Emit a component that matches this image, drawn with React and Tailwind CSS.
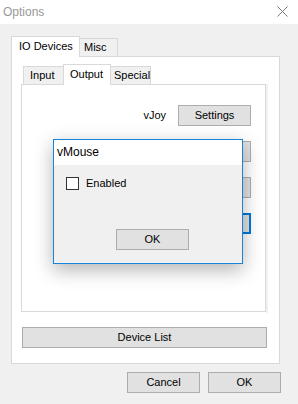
import React from "react";

const Btn = ({ children, focused = false }) => (
  <div
    className={
      focused
        ? "h-[21px] w-[73px] bg-[#e1e1e1] border-2 border-[#0078d7] flex items-center justify-center text-[11px] text-black"
        : "h-[21px] w-[73px] bg-[#e1e1e1] border border-[#adadad] flex items-center justify-center text-[11px] text-black"
    }
  >
    {children}
  </div>
);

export default function App() {
  return (
    <div className="w-[298px] h-[404px] bg-[#f0f0f0] relative overflow-hidden font-['Liberation_Sans',Arial,sans-serif] text-[11px] text-black leading-none">
      {/* title bar */}
      <div className="h-[24px] bg-white flex items-center justify-between pl-[3px] pr-[10px]">
        <span className="text-[12px] text-[#999999] pb-[1px]">Options</span>
        <svg width="11" height="11" viewBox="0 0 11 11" className="mt-[-2px]">
          <path d="M0.5 0.5 L10.5 10.5 M10.5 0.5 L0.5 10.5" stroke="#777" strokeWidth="1" fill="none" />
        </svg>
      </div>

      {/* outer tab control */}
      <div className="pl-[11px] pt-[12px]">
        <div className="flex items-end h-[20px]">
          <div className="relative z-10 -mb-[1px] h-[21px] w-[69px] bg-white border border-b-0 border-[#d9d9d9] pl-[7px] flex items-center pb-[1px]">
            IO Devices
          </div>
          <div className="h-[18px] w-[38px] bg-[#f0f0f0] border border-l-0 border-b-0 border-[#d9d9d9] pl-[4px] flex items-center">
            Misc
          </div>
        </div>
        <div className="w-[269px] h-[308px] border border-[#d9d9d9] bg-white pt-[7px] pl-[9px] flex flex-col">
          {/* inner tabs */}
          <div className="flex items-end h-[20px]">
            <div className="ml-[2px] h-[18px] w-[40px] bg-[#f0f0f0] border border-r-0 border-b-0 border-[#d9d9d9] pl-[6px] flex items-center">
              Input
            </div>
            <div className="relative z-10 -mb-[1px] h-[21px] w-[48px] bg-white border border-b-0 border-[#d9d9d9] pl-[6px] flex items-center pb-[1px]">
              Output
            </div>
            <div className="h-[18px] w-[40px] bg-[#f0f0f0] border border-l-0 border-b-0 border-[#d9d9d9] pl-[3px] flex items-center">
              Special
            </div>
          </div>
          <div className="flex">
            <div className="w-[245px] h-[228px] border border-[#d9d9d9] bg-white pt-[20px] pr-[14px] flex flex-col gap-[15px]">
              <div className="flex items-center justify-end gap-[12px]">
                <span>vJoy</span>
                <Btn>Settings</Btn>
              </div>
              <div className="flex items-center justify-end gap-[12px]">
                <span>vXBox</span>
                <Btn>Settings</Btn>
              </div>
              <div className="flex items-center justify-end gap-[12px]">
                <span>vMouse</span>
                <Btn>Settings</Btn>
              </div>
              <div className="flex items-center justify-end gap-[12px]">
                <span>vKeyboard</span>
                <Btn focused>Settings</Btn>
              </div>
            </div>
            <div className="w-[2px] h-[229px] bg-[#f0f0f0]" />
          </div>
          <div className="mt-[14px] ml-[1px] h-[21px] w-[245px] bg-[#e1e1e1] border border-[#adadad] flex items-center justify-center">
            Device List
          </div>
        </div>
      </div>

      {/* bottom buttons */}
      <div className="flex justify-end gap-[8px] pr-[17px] mt-[8px]">
        <Btn>Cancel</Btn>
        <Btn>OK</Btn>
      </div>

      {/* vMouse dialog */}
      <div className="absolute left-[53px] top-[139px] w-[190px] h-[125px] border border-[#1883d7] bg-[#f0f0f0] shadow-[0_6px_18px_rgba(0,0,0,0.3)] flex flex-col z-20">
        <div className="h-[25px] bg-white flex items-center pl-[3px] pb-[2px] text-[12px]">vMouse</div>
        <div className="pl-[12px] pt-[12px] flex flex-col">
          <div className="flex items-center gap-[7px]">
            <div className="w-[13px] h-[13px] border border-[#333333] bg-white" />
            <span>Enabled</span>
          </div>
          <div className="mt-[39px] ml-[50px]">
            <Btn>OK</Btn>
          </div>
        </div>
      </div>
    </div>
  );
}
